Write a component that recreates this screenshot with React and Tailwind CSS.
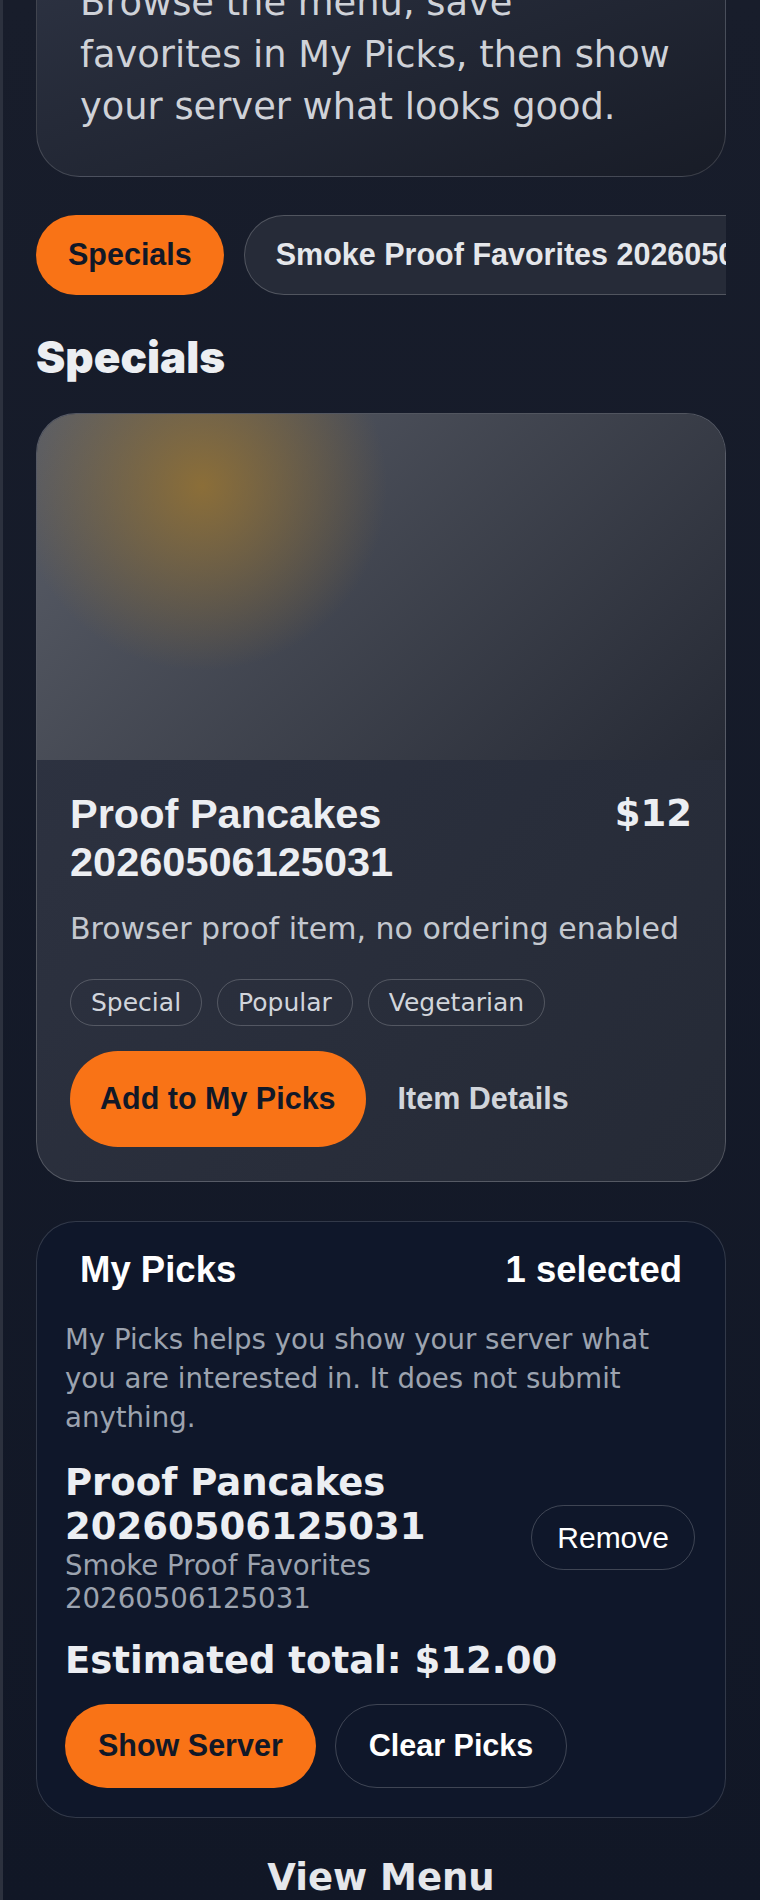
import React from "react";

const sans = "font-['DejaVu_Sans',sans-serif]";
const arial = "font-['Liberation_Sans',Arial,sans-serif]";

const tags = ["Special", "Popular", "Vegetarian"];

function Hero() {
  return (
    <section className="-mt-[68px] rounded-[44px] border border-white/15 bg-gradient-to-br from-[#2e3444] to-[#181c27] px-[43px] pt-11 pb-[43px]">
      <p className={`${sans} text-[36.8px] leading-[52px] text-[#cfd2d8]`}>
        Browse the menu, save favorites in My Picks, then show your server
        what looks good.
      </p>
    </section>
  );
}

function Tabs() {
  return (
    <div className="mt-[38px] flex gap-5 overflow-hidden">
      <button
        className={`${arial} h-20 shrink-0 rounded-full bg-[#f97316] px-[32px] text-[30.5px] font-bold text-[#111827]`}
      >
        Specials
      </button>
      <button
        className={`${arial} h-20 shrink-0 whitespace-nowrap rounded-full border border-white/20 bg-[#262b38] px-[31px] text-[30.5px] font-bold text-[#e5e7eb]`}
      >
        Smoke Proof Favorites 20260506125031
      </button>
    </div>
  );
}

function ItemCard() {
  return (
    <article className="mt-8 overflow-hidden rounded-[40px] border border-white/20 bg-gradient-to-br from-[#2f3443] to-[#252a36]">
      <div className="h-[346px] bg-[image:radial-gradient(circle_at_165px_72px,rgba(150,115,50,0.85),rgba(150,115,50,0)_185px),linear-gradient(135deg,#5a5e68,#262a35)]" />
      <div className="px-[33px] pt-[30px] pb-[34px]">
        <div className="flex items-start justify-between gap-6">
          <h3
            className={`${arial} text-[41.5px] leading-[48px] font-bold text-[#eceef2]`}
          >
            Proof Pancakes
            <br />
            20260506125031
          </h3>
          <span
            className={`${sans} text-[37px] leading-[48px] font-bold text-[#eceef2]`}
          >
            $12
          </span>
        </div>
        <p className={`${sans} mt-5 text-[30px] leading-[45px] text-[#c4c8cf]`}>
          Browser proof item, no ordering enabled
        </p>
        <div className="mt-7 flex gap-[15px]">
          {tags.map((t) => (
            <span
              key={t}
              className={`${sans} flex h-[47px] items-center rounded-full border border-white/20 px-5 text-[25px] text-[#d1d5db]`}
            >
              {t}
            </span>
          ))}
        </div>
        <div className="mt-[25px] flex items-center">
          <button
            className={`${arial} h-24 rounded-full bg-[#f97316] px-[30px] text-[30.5px] font-bold text-[#111827]`}
          >
            Add to My Picks
          </button>
          <button
            className={`${arial} h-24 px-8 text-[30.5px] font-bold text-[#d1d5db]`}
          >
            Item Details
          </button>
        </div>
      </div>
    </article>
  );
}

function MyPicks() {
  return (
    <section className="mt-[39px] rounded-[40px] border border-white/15 bg-[#0f172a] px-[28px] pt-[21px] pb-[29px]">
      <div
        className={`${arial} flex items-center justify-between px-[15px] text-[36.5px] font-bold text-white`}
      >
        <span>My Picks</span>
        <span>1 selected</span>
      </div>
      <p className={`${sans} mt-[22px] text-[27.6px] leading-[39px] text-[#9ca3af]`}>
        My Picks helps you show your server what you are interested in. It
        does not submit anything.
      </p>
      <div className="mt-6 flex items-center justify-between gap-4">
        <div>
          <div
            className={`${sans} text-[37px] leading-[44px] font-bold text-[#eceef2]`}
          >
            Proof Pancakes
            <br />
            20260506125031
          </div>
          <div className={`${sans} text-[27.6px] leading-[33px] text-[#9ca3af]`}>
            Smoke Proof Favorites
            <br />
            20260506125031
          </div>
        </div>
        <button
          className={`${arial} mr-[2px] h-[65px] shrink-0 rounded-full border border-white/20 px-[25px] text-[30px] text-white`}
        >
          Remove
        </button>
      </div>
      <div
        className={`${sans} mt-6 text-[37px] leading-[44px] font-bold text-[#eceef2]`}
      >
        Estimated total: $12.00
      </div>
      <div className="mt-[21px] flex gap-[19px]">
        <button
          className={`${arial} h-[84px] rounded-full bg-[#f97316] px-[33px] text-[30.5px] font-bold text-[#111827]`}
        >
          Show Server
        </button>
        <button
          className={`${arial} h-[84px] rounded-full border border-white/20 px-[33px] text-[30.5px] font-bold text-white`}
        >
          Clear Picks
        </button>
      </div>
    </section>
  );
}

export default function App() {
  return (
    <div className="min-h-[1900px] overflow-hidden border-l-[3px] border-[#2c313e] bg-gradient-to-b from-[#181d2b] to-[#111726] pr-[34px] pl-[33px]">
      <Hero />
      <Tabs />
      <h2
        className="mt-[38px] font-['Inter',sans-serif] text-[44px] leading-[48px] font-black text-[#eceef2]"
      >
        Specials
      </h2>
      <ItemCard />
      <MyPicks />
      <div
        className={`${sans} mt-[38px] text-center text-[37px] leading-[44px] font-bold text-[#e5e7eb]`}
      >
        View Menu
      </div>
    </div>
  );
}
